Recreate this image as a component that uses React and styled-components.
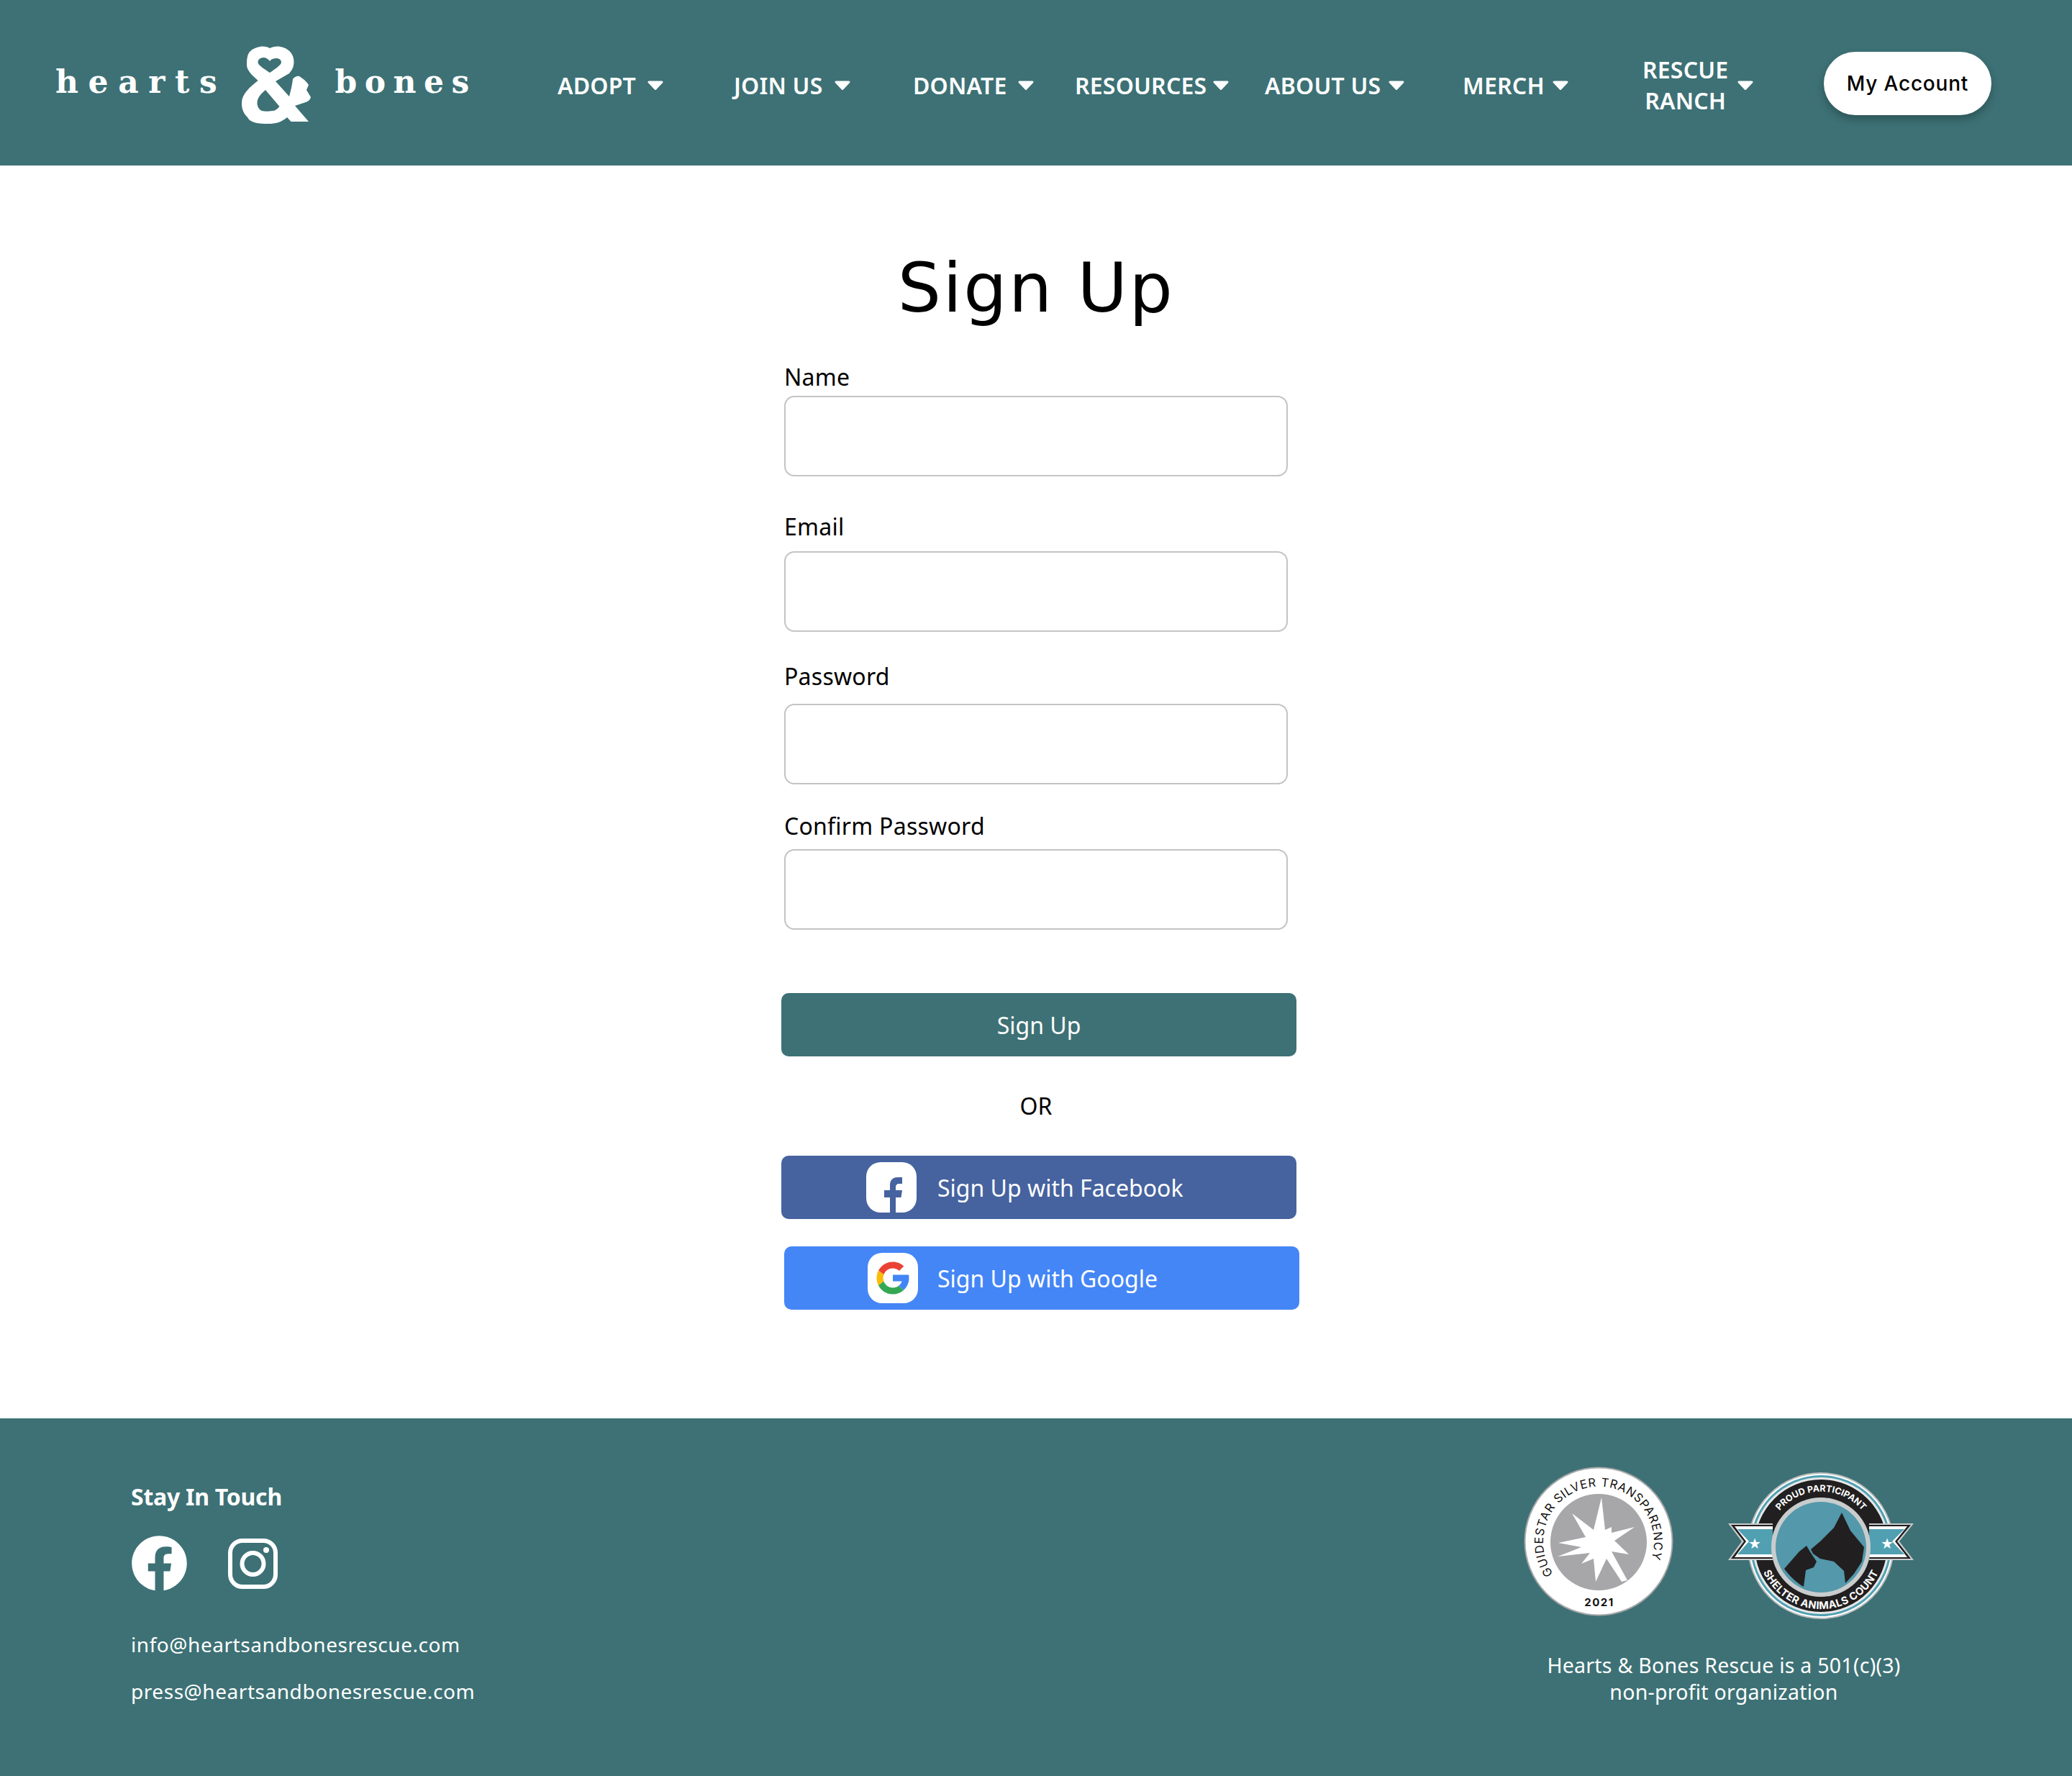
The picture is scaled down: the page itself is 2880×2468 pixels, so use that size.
import React from "react";
import styled, { createGlobalStyle } from "styled-components";
import { FaFacebook } from "react-icons/fa";

const teal = "#3d7175";

const GlobalStyle = createGlobalStyle`
  html, body {
    margin: 0;
    padding: 0;
    background: #ffffff;
    font-family: "Noto Sans", sans-serif;
  }
  * {
    box-sizing: border-box;
  }
`;

const Page = styled.div`
  width: 2880px;
  height: 2468px;
  display: flex;
  flex-direction: column;
`;

const Header = styled.header`
  height: 230px;
  flex: none;
  background-color: ${teal};
  display: flex;
  align-items: center;
  padding: 6px 0 0 77px;
`;

const Logo = styled.div`
  width: 698px;
  flex: none;
  display: flex;
  align-items: center;
`;

const LogoWord = styled.span`
  font-family: "DejaVu Serif", serif;
  font-weight: 700;
  font-size: 44px;
  line-height: 50px;
  letter-spacing: ${(p) => p.$spacing}px;
  color: #ffffff;
  margin-top: -8px;
`;

const Amp = styled.svg`
  width: 100px;
  height: 110px;
  flex: none;
  margin: 0 ${(p) => p.$right}px 0 ${(p) => p.$left}px;
`;

const Nav = styled.nav`
  display: flex;
  align-items: center;
`;

const NavItem = styled.a`
  width: ${(p) => p.$width}px;
  flex: none;
  display: flex;
  align-items: center;
  gap: ${(p) => p.$gap}px;
  color: #ffffff;
  font-weight: 600;
  font-size: 32px;
  line-height: 43px;
  letter-spacing: 0.2px;
  text-align: center;
`;

const Caret = styled.svg`
  width: 22px;
  height: 13px;
  flex: none;
`;

const AccountButton = styled.button`
  width: 233px;
  height: 88px;
  flex: none;
  margin-top: -5px;
  border: 0;
  border-radius: 44px;
  background: #ffffff;
  color: #000000;
  font-family: Inter, sans-serif;
  font-weight: 500;
  font-size: 28px;
  letter-spacing: 0.8px;
  box-shadow: 0 6px 12px rgba(0, 0, 0, 0.25);
`;

const Main = styled.main`
  flex: 1;
  display: flex;
  flex-direction: column;
  align-items: center;
`;

const Title = styled.h1`
  margin: 105px 0 0;
  font-family: "DejaVu Sans", sans-serif;
  font-weight: 400;
  font-size: 95px;
  line-height: 130px;
  letter-spacing: 2.5px;
  color: #000000;
`;

const Form = styled.form`
  width: 700px;
  display: flex;
  flex-direction: column;
  align-items: flex-start;
  padding-top: 38px;
`;

const Label = styled.label`
  margin-top: ${(p) => p.$top}px;
  font-size: 32px;
  line-height: 42px;
  letter-spacing: 0.25px;
  color: #000000;
  height: 42px;
`;

const Input = styled.input`
  width: 700px;
  height: 112px;
  flex: none;
  margin-top: ${(p) => p.$gap}px;
  border: 2px solid #c4c4c4;
  border-radius: 14px;
  background: #ffffff;
`;

const Button = styled.button`
  width: 716px;
  height: 88px;
  flex: none;
  margin-top: ${(p) => p.$top}px;
  margin-left: ${(p) => p.$left}px;
  border: 0;
  border-radius: 10px;
  background: ${(p) => p.$bg};
  color: #ffffff;
  font-family: "Noto Sans", sans-serif;
  font-size: 32px;
  display: flex;
  align-items: center;
  justify-content: ${(p) => (p.$social ? "flex-start" : "center")};
  padding: 0 0 0 ${(p) => (p.$social ? p.$pad : 0)}px;
`;

const BrandBox = styled.span`
  width: 70px;
  height: 70px;
  flex: none;
  border-radius: 20px;
  background: #ffffff;
  display: flex;
  align-items: ${(p) => (p.$end ? "flex-end" : "center")};
  justify-content: center;
  padding-left: ${(p) => (p.$end ? 5 : 0)}px;
  overflow: hidden;
  margin-right: ${(p) => p.$right}px;
`;

const Or = styled.div`
  width: 700px;
  margin-top: 47px;
  text-align: center;
  font-size: 32px;
  line-height: 44px;
  color: #000000;
`;

const Footer = styled.footer`
  height: 497px;
  flex: none;
  background-color: ${teal};
  color: #ffffff;
  display: flex;
  justify-content: space-between;
  padding: 67px 220px 0 182px;
`;

const Contact = styled.div`
  display: flex;
  flex-direction: column;
  align-items: flex-start;
`;

const ContactTitle = styled.div`
  font-weight: 700;
  font-size: 32px;
  line-height: 44px;
  letter-spacing: -0.25px;
  margin-top: 20px;
`;

const Socials = styled.div`
  display: flex;
  align-items: center;
  gap: 56px;
  margin-top: 31px;
`;

const Mail = styled.div`
  font-size: 28px;
  line-height: 40px;
  letter-spacing: 0.55px;
  margin-top: ${(p) => p.$top}px;
`;

const Trust = styled.div`
  display: flex;
  flex-direction: column;
  align-items: center;
`;

const Badges = styled.div`
  display: flex;
  align-items: flex-start;
  gap: 76px;
`;

const Seal = styled.svg`
  flex: none;
  margin-top: ${(p) => p.$top}px;
`;

const Caption = styled.div`
  margin: 46px 0 0 14px;
  text-align: center;
  font-size: 28.5px;
  line-height: 37px;
  letter-spacing: 0.25px;
`;

const NavCaret = () => (
  <Caret viewBox="0 0 22 13">
    <path d="M2 2h18L11 11.500z" fill="#fff" stroke="#fff" strokeWidth="3" strokeLinejoin="round" />
  </Caret>
);

const navItems = [
  { label: "ADOPT", width: 245, gap: 16 },
  { label: "JOIN US", width: 249, gap: 16 },
  { label: "DONATE", width: 225, gap: 15 },
  { label: "RESOURCES", width: 264, gap: 9 },
  { label: "ABOUT US", width: 275, gap: 11 },
  { label: "MERCH", width: 250, gap: 11 },
];

const AmpMark = () => (
  <Amp $left={20} $right={30} viewBox="0 0 100 110">
    <path
      fillRule="evenodd"
      fill="#fff"
      d="M26 2C32 1 37 2 40 4C44 2 49 1 55 2C66 4 74 12 73.500 24C73 31 71 34 67 39L48 50L67 71C69 63 71 56 72 47C74 44 78 42 81 43C86 46 91 50 94 55L91 62L97 72C96 76 93 78 90 79L75 84L94 106H69.500L64 100C56 107 48 109 38 109C24 109 13 108 9 100C3 94 1 88 1 80C1 68 12 58 23.600 49C15 41 8 35 8 27C8 18 9 13 12 9C16 5 20 3 26 2Z
         M23.600 24C23 20 27 17 31 17C35 17 38 19 40 22C42 19 45 18 49 18C53 18 56 20 56 24C55 28 47 33 40 38C33 33 24 28 23.600 24Z
         M34 62L53.500 85C50 89 47 91 44 91C38 92 33 92 29 91C25 89 22.500 85 22.500 80C22.500 73 28 67 34 62Z"
    />
  </Amp>
);

const FacebookF = () => (
  <svg width="25" height="49" viewBox="0 0 25 49">
    <path
      fill="#46639f"
      d="M8 49V28H0V18H8V11C8 4 12 0 18 0H25V9H21C17.500 9 16 11 16 14V18H25L23.500 28H16V49z"
    />
  </svg>
);

const GoogleG = () => (
  <svg width="54" height="54" viewBox="0 0 48 48">
    <path fill="#fbbc05" d="M6.300 14.700C4.800 17.500 4 20.700 4 24s.8 6.200 2.200 9.100l6.500-5C12.200 26.800 12 25.400 12 24s.3-3.100.9-4.500z" />
    <path fill="#ea4335" d="M6.306 14.691l6.571 4.819C14.655 15.108 18.961 12 24 12c3.059 0 5.842 1.154 7.961 3.039l5.657-5.657C34.046 6.053 29.268 4 24 4 16.318 4 9.656 8.337 6.306 14.691z" />
    <path fill="#34a853" d="M24 44c5.166 0 9.860-1.977 13.409-5.192l-6.190-5.238C29.211 35.091 26.715 36 24 36c-5.202 0-9.619-3.317-11.283-7.946l-6.522 5.025C9.505 39.556 16.227 44 24 44z" />
    <path fill="#4285f4" d="M43.611 20.083H42V20H24v8h11.303c-.792 2.237-2.231 4.166-4.087 5.571l6.190 5.238C36.971 39.205 44 34 44 24c0-1.341-.138-2.650-.389-3.917z" />
  </svg>
);

const InstagramMark = () => (
  <svg width="69" height="70" viewBox="0 0 69 70" fill="none" stroke="#fff" strokeWidth="6">
    <rect x="3" y="3" width="63" height="64" rx="17" />
    <circle cx="34.500" cy="35" r="15" />
    <circle cx="53" cy="16" r="4" fill="#fff" stroke="none" />
  </svg>
);

const GuidestarBadge = () => (
  <Seal $top={0} width="208" height="208" viewBox="0 0 208 208">
    <circle cx="104" cy="104" r="102.500" fill="#fff" stroke="#a7a7a9" strokeWidth="2" />
    <circle cx="104" cy="105" r="67" fill="#a7a6a9" />
    <polygon
      fill="#fff"
      points="108,43 113,88 122,84 122,92 154,84 126,103 146,122 122,118 144,158 136,160 115,128 100,160 97,128 80,135 92,120 47,125 80,112 48,106 86,98 67,65 97,88"
    />
    <path id="gs-arc" d="M41 149A77 77 0 1 1 167 149" fill="none" />
    <text fontFamily="Inter, sans-serif" fontSize="16.500" fill="#111" letterSpacing="0.800">
      <textPath href="#gs-arc">GUIDESTAR SILVER TRANSPARENCY</textPath>
    </text>
    <text x="105" y="194" textAnchor="middle" fontFamily="Inter, sans-serif" fontSize="15" fontWeight="700" letterSpacing="1.500" fill="#111">
      2021
    </text>
  </Seal>
);

const ShelterBadge = () => (
  <Seal $top={8} width="258" height="204" viewBox="0 0 258 204">
    <circle cx="129" cy="102" r="101" fill="#fff" stroke="#b9bcbd" strokeWidth="2" />
    <circle cx="129" cy="102" r="98" fill="#50a0b2" />
    <circle cx="129" cy="102" r="95" fill="#e6e8e8" />
    <circle cx="129" cy="102" r="92" fill="#221f20" />
    <path d="M0 71H62V122H0L19 96Z" fill="#c9cccd" />
    <path d="M4 73H62V120H4L22 96Z" fill="#221f20" />
    <path d="M9 75H62V118H9L25 96Z" fill="#fff" />
    <path d="M13 79H62V114H13L29 96Z" fill="#50a0b2" />
    <path d="M258 71H196V122H258L238 96Z" fill="#c9cccd" />
    <path d="M254 73H196V120H254L235 96Z" fill="#221f20" />
    <path d="M249 75H196V118H249L232 96Z" fill="#fff" />
    <path d="M245 79H196V114H245L228 96Z" fill="#50a0b2" />
    <text x="37" y="106" textAnchor="middle" fontSize="20" fill="#fff" fontFamily="'DejaVu Sans', sans-serif">★</text>
    <text x="221" y="106" textAnchor="middle" fontSize="20" fill="#fff" fontFamily="'DejaVu Sans', sans-serif">★</text>
    <circle cx="129" cy="104" r="69" fill="#c9cccd" />
    <circle cx="129" cy="104" r="63" fill="#5398ab" />
    <path fill="#221f20" d="M158 56L170 81L189 104L186 124L175 141L163 154L161 137L147 124L128 120L118 113L115 107L128 96L147 77Z" />
    <path fill="#221f20" d="M109 102L115 112L123 124L119 132L108 136L105 159C96 154 86 145 78 134L99 110Z" />
    <path id="sa-top" d="M71 54A75 75 0 0 1 187 54" fill="none" />
    <text fontFamily="Inter, sans-serif" fontSize="12.500" fontWeight="700" fill="#fff" textAnchor="middle">
      <textPath href="#sa-top" startOffset="50%">PROUD PARTICIPANT</textPath>
    </text>
    <path id="sa-bottom" d="M47 134A88 88 0 0 0 211 134" fill="none" />
    <text fontFamily="Inter, sans-serif" fontSize="14.500" fontWeight="700" fill="#fff" textAnchor="middle" letterSpacing="0.400">
      <textPath href="#sa-bottom" startOffset="50%">SHELTER ANIMALS COUNT</textPath>
    </text>
  </Seal>
);

const App = () => (
  <Page>
    <GlobalStyle />
    <Header>
      <Logo>
        <LogoWord $spacing={13.6}>hearts</LogoWord>
        <AmpMark />
        <LogoWord $spacing={10.5}>bones</LogoWord>
      </Logo>
      <Nav>
        {navItems.map((item) => (
          <NavItem key={item.label} $width={item.width} $gap={item.gap}>
            {item.label}
            <NavCaret />
          </NavItem>
        ))}
        <NavItem $width={252} $gap={13}>
          <span>
            RESCUE
            <br />
            RANCH
          </span>
          <NavCaret />
        </NavItem>
      </Nav>
      <AccountButton>My Account</AccountButton>
    </Header>
    <Main>
      <Title>Sign Up</Title>
      <Form>
        <Label $top={0}>Name</Label>
        <Input $gap={5} />
        <Label $top={49}>Email</Label>
        <Input $gap={13} />
        <Label $top={41}>Password</Label>
        <Input $gap={17} />
        <Label $top={37}>Confirm Password</Label>
        <Input $gap={11} />
        <Button $bg={teal} $top={88} $left={-4}>Sign Up</Button>
        <Or>OR</Or>
        <Button $bg="#46639f" $top={47} $left={-4} $social $pad={118}>
          <BrandBox $end $right={29}><FacebookF /></BrandBox>
          Sign Up with Facebook
        </Button>
        <Button $bg="#4486f6" $top={38} $left={0} $social $pad={116}>
          <BrandBox $right={27}><GoogleG /></BrandBox>
          Sign Up with Google
        </Button>
      </Form>
    </Main>
    <Footer>
      <Contact>
        <ContactTitle>Stay In Touch</ContactTitle>
        <Socials>
          <FaFacebook size={79} color="#fff" />
          <InstagramMark />
        </Socials>
        <Mail $top={53}>info@heartsandbonesrescue.com</Mail>
        <Mail $top={25}>press@heartsandbonesrescue.com</Mail>
      </Contact>
      <Trust>
        <Badges>
          <GuidestarBadge />
          <ShelterBadge />
        </Badges>
        <Caption>
          Hearts &amp; Bones Rescue is a 501(c)(3)
          <br />
          non-profit organization
        </Caption>
      </Trust>
    </Footer>
  </Page>
);

export default App;
